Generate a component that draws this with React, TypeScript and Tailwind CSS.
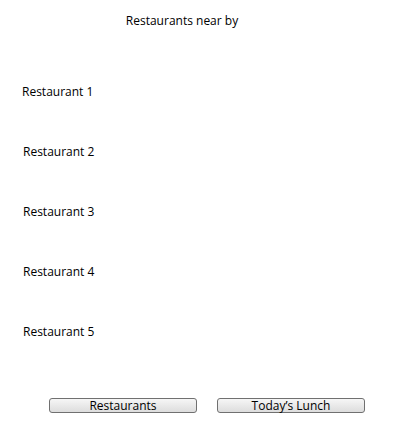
export default function App() {
  const restaurants = ["Restaurant 1", "Restaurant 2", "Restaurant 3", "Restaurant 4", "Restaurant 5"];

  return (
    <div className="w-[405px] h-[431px] bg-white text-black text-[12px] font-['Open_Sans',sans-serif] flex flex-col">
      <div className="w-[364px] text-center pt-[12px] leading-[18px]">Restaurants near by</div>

      <div className="flex flex-col pt-[32px]">
        {restaurants.map((r, i) => (
          <div key={r} className={`h-[60px] flex items-center leading-[18px] ${i === 0 ? "pl-[22px]" : "pl-[23px]"}`}>
            {r}
          </div>
        ))}
      </div>

      <div className="flex gap-[20px] pl-[49px] pt-[36px]">
        <button className="w-[148px] h-[15px] border border-[#707070] rounded-[3px] bg-gradient-to-b from-[#f6f6f6] to-[#dddddd] leading-[13px] text-[12px]">
          Restaurants
        </button>
        <button className="w-[148px] h-[15px] border border-[#707070] rounded-[3px] bg-gradient-to-b from-[#f6f6f6] to-[#dddddd] leading-[13px] text-[12px]">
          Today’s Lunch
        </button>
      </div>
    </div>
  );
}
